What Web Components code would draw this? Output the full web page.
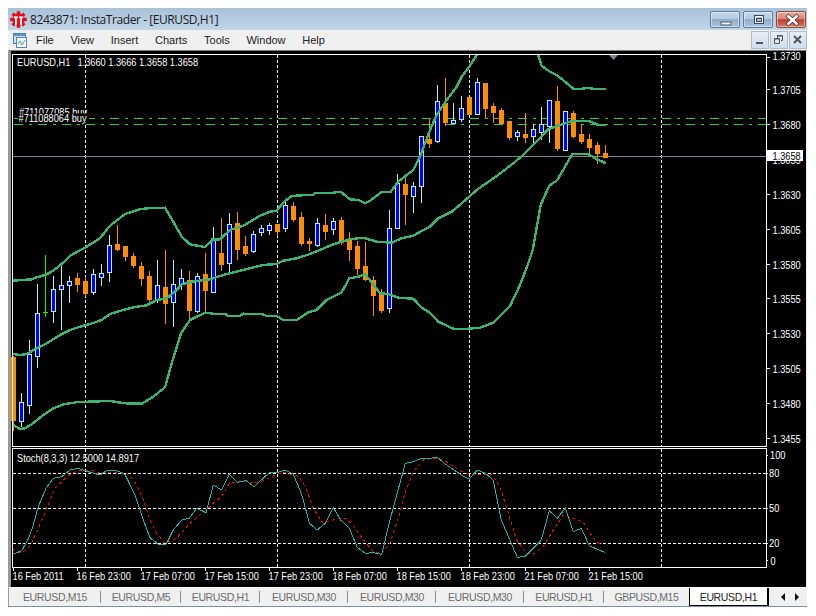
<!DOCTYPE html>
<html>
<head>
<meta charset="utf-8">
<title>InstaTrader</title>
<style>
  body { background: #fff; font-family: "Liberation Sans", Arial, sans-serif; }
</style>
</head>
<body>
<mt-window>
  <mt-titlebar slot="title">8243871: InstaTrader - [EURUSD,H1]</mt-titlebar>
  <mt-menubar slot="menu"></mt-menubar>
  <mt-chart slot="chart"></mt-chart>
  <mt-tabs slot="tabs"></mt-tabs>
</mt-window>

<script>
class MtWindow extends HTMLElement {
  constructor() {
    super();
    this.attachShadow({mode:'open'}).innerHTML = `
      <style>
        :host { display: flex; flex-direction: column; width: 799px; height: 599px; }
      </style>
      <slot name="title"></slot>
      <slot name="menu"></slot>
      <slot name="chart"></slot>
      <slot name="tabs"></slot>`;
  }
}

class MtCapButton extends HTMLElement {
  constructor() {
    super();
    const kind = this.getAttribute('kind');
    const glyphs = {
      min: '<rect x="10" y="10" width="10" height="3" fill="#f4f6f8" stroke="#4a5a6a" stroke-width="1"/>',
      max: '<rect x="10.5" y="3.5" width="9" height="8" fill="none" stroke="#34485c" stroke-width="1"/><rect x="11.5" y="4.5" width="7" height="6" fill="none" stroke="#f0f4f8" stroke-width="1"/><rect x="12.5" y="6.5" width="5" height="3" fill="#a9c3dc" stroke="#34485c" stroke-width="1"/>',
      close: '<path d="M10 3 L21 13 M21 3 L10 13" stroke="#5a3030" stroke-width="4"/><path d="M10.5 3.5 L20.5 12.5 M20.5 3.5 L10.5 12.5" stroke="#fff" stroke-width="2.4"/>'
    };
    this.attachShadow({mode:'open'}).innerHTML = `
      <style>
        :host { display: block; width: 30px; height: 17px; box-sizing: border-box; border: 1px solid #5f7d99; border-radius: 2px; background: linear-gradient(#c6d8ea 0, #b4cbe1 45%, #8fadc9 50%, #a9c4dd 100%); box-shadow: inset 0 0 0 1px rgba(255,255,255,.45); }
        :host([kind=close]) { border-color: #8a4a40; background: linear-gradient(#e5ab9f 0, #d68777 45%, #bb3d2b 52%, #d77a66 100%); }
        svg { display: block; }
      </style>
      <svg width="30" height="15" viewBox="0 0 30 15">${glyphs[kind]}</svg>`;
  }
}

class MtTitlebar extends HTMLElement {
  constructor() {
    super();
    let teeth = '';
    for (let a = 0; a < 8; a++) {
      teeth += `<rect x="6.8" y="0.2" width="3.4" height="4" fill="#e2101a" transform="rotate(${a * 45} 8.5 8.5)"/>`;
    }
    this.attachShadow({mode:'open'}).innerHTML = `
      <style>
        :host { display: flex; align-items: center; height: 22px; flex: none; padding: 0 0 0 2px; color: #1a1a1a; background: linear-gradient(#a8c2db, #c2d5e7); font: 12px "Open Sans", "Liberation Sans", sans-serif; letter-spacing: -.42px; }
        svg.logo { margin-right: 3px; flex: none; }
        .text { flex: 1; white-space: nowrap; }
        .buttons { display: flex; gap: 3px; margin-right: 1px; }
      </style>
      <svg class="logo" width="17" height="17" viewBox="0 0 17 17">
        ${teeth}
        <circle cx="8.5" cy="8.5" r="6.2" fill="#e2101a"/>
        <rect x="3.8" y="5.4" width="4" height="1.8" fill="#fff"/>
        <rect x="9.2" y="5.4" width="4" height="1.8" fill="#fff"/>
        <rect x="5" y="7" width="1.8" height="7" fill="#fff"/>
        <rect x="10.2" y="7" width="1.8" height="7" fill="#fff"/>
      </svg>
      <span class="text"><slot></slot></span>
      <div class="buttons">
        <mt-cap-button kind="min"></mt-cap-button>
        <mt-cap-button kind="max"></mt-cap-button>
        <mt-cap-button kind="close"></mt-cap-button>
      </div>`;
  }
}

class MtMdiButton extends HTMLElement {
  constructor() {
    super();
    const glyphs = {
      min: '<rect x="5" y="11" width="7" height="2" fill="#555"/>',
      restore: '<path d="M7.5 4.5 H12.5 V9.5 H11 M4.5 7.5 H9.5 V12.5 H4.5 Z M7.5 4.5 V7" fill="none" stroke="#555"/><path d="M7 5 H13 M4 8 H10" stroke="#555"/>',
      close: '<path d="M5 5 L12 12 M12 5 L5 12" stroke="#555" stroke-width="2"/>'
    };
    this.attachShadow({mode:'open'}).innerHTML = `
      <style>
        :host { display: block; width: 18px; height: 18px; box-sizing: border-box; background: linear-gradient(#e6eef6, #cfdeed); border: 1px solid #b0bcc8; }
        svg { display: block; margin: -1px 0 0 -1px; }
      </style>
      <svg width="18" height="18" viewBox="0 0 18 18">${glyphs[this.getAttribute('kind')]}</svg>`;
  }
}

class MtMenubar extends HTMLElement {
  constructor() {
    super();
    const items = ['File', 'View', 'Insert', 'Charts', 'Tools', 'Window', 'Help'];
    this.attachShadow({mode:'open'}).innerHTML = `
      <style>
        :host { display: flex; align-items: center; height: 20px; flex: none; background: #f0f0f0; font: 11px "Liberation Sans", sans-serif; color: #222; padding-left: 5px; box-sizing: border-box; }
        svg.icon { flex: none; margin-right: 9px; }
        nav { display: flex; gap: 16.7px; flex: 1; }
        .right { display: flex; gap: 1px; }
      </style>
      <svg class="icon" width="14" height="15" viewBox="0 0 14 15">
        <rect x="0.5" y="0.5" width="12" height="10" fill="#cfe0f2" stroke="#4a7fb5"/>
        <rect x="1" y="1" width="11" height="2" fill="#5d93c9"/>
        <rect x="3.5" y="4.5" width="10" height="10" fill="#f4f8fc" stroke="#5a84ac"/>
        <path d="M5 11 L7 8 L9 12 L12 7" fill="none" stroke="#4aa0a0"/>
      </svg>
      <nav>${items.map(i => `<span>${i}</span>`).join('')}</nav>
      <div class="right">
        <mt-mdi-button kind="min"></mt-mdi-button>
        <mt-mdi-button kind="restore"></mt-mdi-button>
        <mt-mdi-button kind="close"></mt-mdi-button>
      </div>`;
  }
}

// type: o = bear, b = bull, d = doji; bodyTop, bodyBottom, wickTop, wickBottom. x = 13 + 8 * index
const CANDLES = [
  ['o',357,420,356,431],['b',402,421,393,427],['b',354,405,340,414],['b',313,356,284,368],['d',312,312,255,317],
  ['b',289,311,276,323],['b',285,289,262,330],['b',281,285,276,303],['o',278,284,273,292],['o',281,293,277,297],
  ['b',274,292,269,295],['b',273,277,264,286],['b',245,272,235,282],['o',244,249,225,251],['o',246,256,246,261],
  ['o',256,265,253,268],['o',266,278,262,286],['o',276,299,271,303],['b',285,300,260,303],['o',287,303,250,324],
  ['b',284,302,260,327],['b',278,284,269,290],['o',280,310,271,319],['b',276,311,273,313],['o',274,290,253,312],
  ['b',238,292,227,292],['o',253,264,218,271],['b',224,263,213,272],['o',223,249,212,260],['o',246,253,236,256],
  ['b',234,251,231,253],['b',228,232,225,236],['b',225,230,223,235],['o',224,231,224,236],['b',205,228,199,232],
  ['o',206,219,202,222],['o',217,243,212,246],['o',241,243,238,251],['b',223,245,218,247],['o',225,231,214,240],
  ['b',221,229,218,235],['o',220,242,217,245],['o',240,249,232,261],['o',246,268,241,275],['o',266,279,242,281],
  ['o',280,295,276,316],['o',292,310,289,313],['b',228,308,210,313],['b',183,228,174,229],['o',184,194,174,225],
  ['b',186,196,182,213],['b',136,186,136,203],['o',139,143,118,148],['b',101,141,85,143],['o',103,122,78,126],
  ['b',120,123,103,124],['b',108,119,96,122],['o',97,114,97,114],['b',82,114,78,114],['o',83,108,83,119],
  ['o',106,112,103,123],['o',110,123,108,123],['o',121,137,121,140],['b',132,136,130,141],['o',134,137,113,143],
  ['b',129,136,124,144],['b',124,132,107,140],['b',100,126,100,143],['o',101,148,86,151],['b',111,150,111,151],
  ['o',113,136,111,138],['o',134,141,124,144],['o',139,147,134,153],['o',145,153,142,164],['o',153,157,145,157]
];

const BAND_UPPER = '12.7,280.7 22.7,280 31.7,279.3 36.7,277.3 45.3,275 53.3,270.7 61.7,264 70,256 76.7,252 85,247.7 100,238.3 110,225.7 125,214 140,209.3 150,208 165,207.7 173.3,221.7 181.7,236.7 190,244.3 205,247 213.3,239.3 220,239.3 230,230 243.3,225.7 260,215.7 270,211.7 276.7,210.7 283,202.7 291.7,196 301.7,195.3 313,195 315,192.7 333.3,192.7 340.7,191.7 350,199.3 358.3,200 365,203.3 370,200.7 381.7,192 390.7,191.7 398.3,181.7 413.3,170 420,156.7 430,130 436.7,115 446.7,100 456.7,86.7 461.7,76.7 469.3,66.7 476.7,55 480,50';
const BAND_UPPER2 = '536,48 538.3,55 541.7,66 550,71.7 556.7,75 565,81.7 573.3,88.7 581.7,88.7 588.3,88 595,89 606,89';
const BAND_MIDDLE = '12.7,354 20,355 26.7,354 36.7,348.3 46.7,343.3 60,335 70,330 80,326.7 90,324 101.7,320 110,314 126.7,309 135,307 146.7,305.3 156.7,300 166.7,298.3 176.7,290 181.7,284.3 191.7,281.7 210,279.3 223.3,275 243.3,270 263.3,265 276.7,264 283.3,260.7 296.7,258.3 310,254 320,250 333.3,244.3 350,239.3 363.3,237.7 376.7,241.7 391.7,242.7 401.7,238.3 413.3,235.7 423.3,230 430,226.7 438.3,218.3 451.7,211.7 461.7,203.3 476.7,190 496.7,176 513.3,163.3 520,157.7 533,145 548.3,129.3 556.7,126 573.3,120.7 588.3,120.7 598.3,125 606,125';
const BAND_LOWER = '13.3,425 20,429 25,428.3 31.7,424.3 43.3,415 53.3,408.3 63.3,404.3 78.3,402 110,401 125,403.3 141.7,403.7 153.3,396.7 165,387.3 171.7,363.3 181,333.3 190,320 205,312.7 213.3,313.7 225,314 228.3,316 240,315.7 243.3,313.7 261.7,314 266.7,316 276.7,316 283.3,320 296.7,320 308.3,312.3 316.7,310 326.7,300 341.7,292.3 349.3,278.3 358.3,276.7 365,274 380,293.3 388.3,294 398.3,297.7 413.3,298.7 421.7,307.7 430,312.7 438.3,321.7 453.3,328.7 465,329 480,327.7 493.3,322.7 510,306 520,285 528.3,263.3 532.7,250 540.7,205 549.3,185.7 557.3,180 572.3,154 588.3,154 596.7,159.3 606,163.3';

// stochastic points are kept as pixels read off two 3x crops
const crop = (ox, pts) => pts.map(([x, y]) => `${(ox + x / 3).toFixed(1)},${(440 + y / 3).toFixed(1)}`).join(' ');
const STOCH_MAIN = crop(0, [[38,343],[65,332],[85,297],[100,255],[115,200],[138,145],[160,115],[185,110],[210,90],[235,85],[255,92],[300,105],[322,90],[345,90],[375,103],[405,165],[430,240],[450,293],[475,313],[497,315],[520,270],[545,240],[568,235],[590,205],[618,218],[640,135],[665,150],[688,102],[712,127],[738,122],[762,140],[808,98],[830,98],[855,90],[880,103]])
  + ' ' + crop(300, [[0,150],[10,180],[28,250],[52,270],[76,250],[100,203],[122,240],[148,265],[172,322],[196,340],[220,338],[245,343],[270,240],[316,70],[340,65],[364,55],[388,55],[412,52],[436,72],[484,105],[508,117],[532,90],[556,100],[580,120],[604,240],[652,352],[676,349],[724,300],[748,212],[772,235],[796,205],[820,275],[844,265],[868,317],[892,328],[914,337]]);
const STOCH_SIGNAL = crop(0, [[38,328],[65,340],[90,318],[115,265],[140,205],[165,145],[190,120],[215,100],[240,90],[265,90],[300,98],[330,97],[375,97],[400,118],[425,165],[450,240],[470,280],[495,310],[530,295],[570,250],[595,228],[620,210],[645,185],[665,170],[688,130],[740,122],[762,130],[790,122],[830,102],[855,97],[890,108]])
  + ' ' + crop(300, [[0,115],[20,150],[40,205],[70,250],[100,240],[120,235],[140,236],[165,265],[195,305],[220,335],[245,340],[270,310],[295,235],[318,150],[340,95],[370,60],[400,55],[430,60],[480,92],[510,103],[575,103],[600,140],[625,220],[650,300],[680,340],[700,343],[730,320],[760,270],[790,225],[820,235],[850,247],[880,295],[905,318]]);

// chart text is squeezed a little: the terminal's font is tall and narrow
const label = (x, y, s, fill) => `<text transform="translate(${x} ${y}) scale(.88 1)"${fill ? ` style="fill:${fill}"` : ''}>${s}</text>`;

class MtChart extends HTMLElement {
  constructor() {
    super();
    this.attachShadow({mode:'open'}).innerHTML = `
      <style>
        :host { display: block; flex: none; height: 537px; background: #000; border-top: 1px solid #7a7a7a; border-left: 3px solid #9a9a9a; border-right: 1px solid #f0f0f0; box-sizing: border-box; }
        svg { display: block; font: 10.5px "Liberation Sans", sans-serif; }
        text { fill: #fff; }
        .crisp { shape-rendering: crispEdges; }
      </style>
      ${this.renderSvg()}`;
  }
  candles() {
    return CANDLES.map(([type, top, bottom, wickTop, wickBottom], i) => {
      const x = 13 + 8 * i;
      if (type === 'd') {
        return `<rect x="${x}" y="${wickTop}" width="1" height="${wickBottom - wickTop}" fill="#00ff00"/><rect x="${x - 2}" y="${top}" width="5" height="1" fill="#00ff00"/>`;
      }
      const color = type === 'o' ? '#ff8c00' : '#0000ff';
      const line = type === 'o' ? '#ff8c00' : '#b4eef0';
      return `<rect x="${x}" y="${wickTop}" width="1" height="${wickBottom - wickTop}" fill="${line}"/>` +
        `<rect x="${x - 2}" y="${top}" width="5" height="${bottom - top + 1}" fill="${type === 'o' ? color : line}"/>` +
        (type === 'b' ? `<rect x="${x - 1}" y="${top + 1}" width="3" height="${Math.max(bottom - top - 1, 1)}" fill="${color}"/>` : '');
    }).join('');
  }
  renderSvg() {
    const verticals = [85, 277, 469, 661];
    const prices = [['1.3730',60],['1.3705',93.7],['1.3680',128.7],['1.3630',198.7],['1.3605',233.7],['1.3580',268.5],['1.3555',303],['1.3530',338],['1.3505',373],['1.3480',407.7],['1.3455',442.5]];
    const ticks = [57, 89, 124, 194, 229, 264, 298, 333, 368, 403, 438, 159];
    const subLabels = [['100',770,459],['80',769,476.5],['50',769,511.5],['20',769,546.5],['0',770.5,564.5]];
    const dates = ['16 Feb 2011','16 Feb 23:00','17 Feb 07:00','17 Feb 15:00','17 Feb 23:00','18 Feb 07:00','18 Feb 15:00','18 Feb 23:00','21 Feb 07:00','21 Feb 15:00'];
    const dash = 'stroke="#fff" stroke-dasharray="3 2"';
    return `
    <svg width="795" height="536" viewBox="11 51 795 536">
      <defs><clipPath id="mainclip"><rect x="13" y="55" width="753" height="391"/></clipPath></defs>
      <g class="crisp">
        ${verticals.map(x => `<line x1="${x + .5}" y1="55" x2="${x + .5}" y2="446" ${dash}/><line x1="${x + .5}" y1="449" x2="${x + .5}" y2="567" ${dash}/>`).join('')}
        ${[473.5, 508.5, 543.5].map(y => `<line x1="13" y1="${y}" x2="766" y2="${y}" ${dash}/>`).join('')}
        ${[118.5, 124.5].map(y => `<line x1="14" y1="${y}" x2="766" y2="${y}" stroke="#32cd32" stroke-dasharray="9 6 3 6"/>`).join('')}
        <line x1="13" y1="156.5" x2="766" y2="156.5" stroke="#778899"/>
        ${this.candles()}
      </g>
      <g clip-path="url(#mainclip)" fill="none" stroke="#3cb371" stroke-width="2.4" class="crisp">
        <polyline points="${BAND_UPPER}"/><polyline points="${BAND_UPPER2}"/>
        <polyline points="${BAND_MIDDLE}"/><polyline points="${BAND_LOWER}"/>
      </g>
      <g fill="none" class="crisp">
        <polyline points="${STOCH_SIGNAL}" stroke="#ff0000" stroke-dasharray="3 3"/>
        <polyline points="${STOCH_MAIN}" stroke="#20b2aa"/>
      </g>
      <g class="crisp" fill="none" stroke="#fff">
        <rect x="12.5" y="54.5" width="754" height="392"/>
        <rect x="12.5" y="448.5" width="754" height="119"/>
        ${ticks.map(y => `<line x1="767" y1="${y + .5}" x2="770" y2="${y + .5}"/>`).join('')}
        ${[473, 508, 543, 455, 560].map(y => `<line x1="767" y1="${y + .5}" x2="768" y2="${y + .5}"/>`).join('')}
        ${dates.map((d, i) => `<line x1="${13.5 + 64 * i}" y1="568" x2="${13.5 + 64 * i}" y2="571"/>`).join('')}
      </g>
      <polygon points="609,55 618,55 613.5,60" fill="#778899"/>
      ${label(17, 66, 'EURUSD,H1')}
      ${label(77.5, 66, '1.3660 1.3666 1.3658 1.3658')}
      ${label(19, 116, '#711077085 buy')}
      <rect x="18" y="113.5" width="71" height="9" fill="#000"/>
      ${label(18.5, 122, '#711088064 buy')}
      ${label(17, 462, 'Stoch(8,3,3) 12.5000 14.8917')}
      ${prices.map(([p, y]) => label(772.5, y, p)).join('')}
      ${label(772.5, 163.5, '1.3655')}
      <rect x="767" y="150" width="36" height="11" fill="#fff"/>
      ${label(772.5, 160, '1.3658', '#000')}
      ${subLabels.map(([t, x, y]) => label(x, y, t)).join('')}
      ${dates.map((d, i) => label(12.5 + 64 * i, 580, d)).join('')}
    </svg>`;
  }
}

class MtTabs extends HTMLElement {
  constructor() {
    super();
    const tabs = [['EURUSD,M15',92],['EURUSD,M5',80],['EURUSD,H1',79],['EURUSD,M30',88],['EURUSD,M30',88],['EURUSD,M30',88],['EURUSD,H1',80],['GBPUSD,M15',85]];
    this.attachShadow({mode:'open'}).innerHTML = `
      <style>
        :host { display: flex; flex: none; height: 20px; box-sizing: border-box; background: #f0f0f0; border-top: 1px solid #fff; border-bottom: 1px solid #7f8fa3; border-left: 1px solid #9a9a9a; font: 10.5px "Liberation Sans", sans-serif; letter-spacing: -.35px; color: #6c6c6c; }
        .tab { display: flex; align-items: center; justify-content: center; box-sizing: border-box; position: relative; white-space: nowrap; }
        .tab::after { content: ""; position: absolute; right: 0; top: 3px; bottom: 3px; width: 1px; background: #8a8a8a; }
        .tab.last::after { display: none; }
        .active { width: 80px; background: #fff; color: #222; border-left: 1px solid #000; border-right: 2px solid #000; border-bottom: 1px solid #000; }
        .arrows { flex: 1; display: flex; align-items: center; justify-content: space-between; padding: 0 7px 0 11px; }
        .arrows svg { display: block; }
      </style>
      ${tabs.map(([t, w], i) => `<div class="tab${i === tabs.length - 1 ? ' last' : ''}" style="width:${w}px">${t}</div>`).join('')}
      <div class="tab last active">EURUSD,H1</div>
      <div class="arrows">
        <svg width="5" height="8" viewBox="0 0 5 8"><polygon points="5,0 5,8 1,4" fill="#111"/></svg>
        <svg width="5" height="8" viewBox="0 0 5 8"><polygon points="0,0 0,8 4,4" fill="#111"/></svg>
      </div>`;
  }
}

customElements.define('mt-window', MtWindow);
customElements.define('mt-cap-button', MtCapButton);
customElements.define('mt-titlebar', MtTitlebar);
customElements.define('mt-mdi-button', MtMdiButton);
customElements.define('mt-menubar', MtMenubar);
customElements.define('mt-chart', MtChart);
customElements.define('mt-tabs', MtTabs);
</script>
</body>
</html>
